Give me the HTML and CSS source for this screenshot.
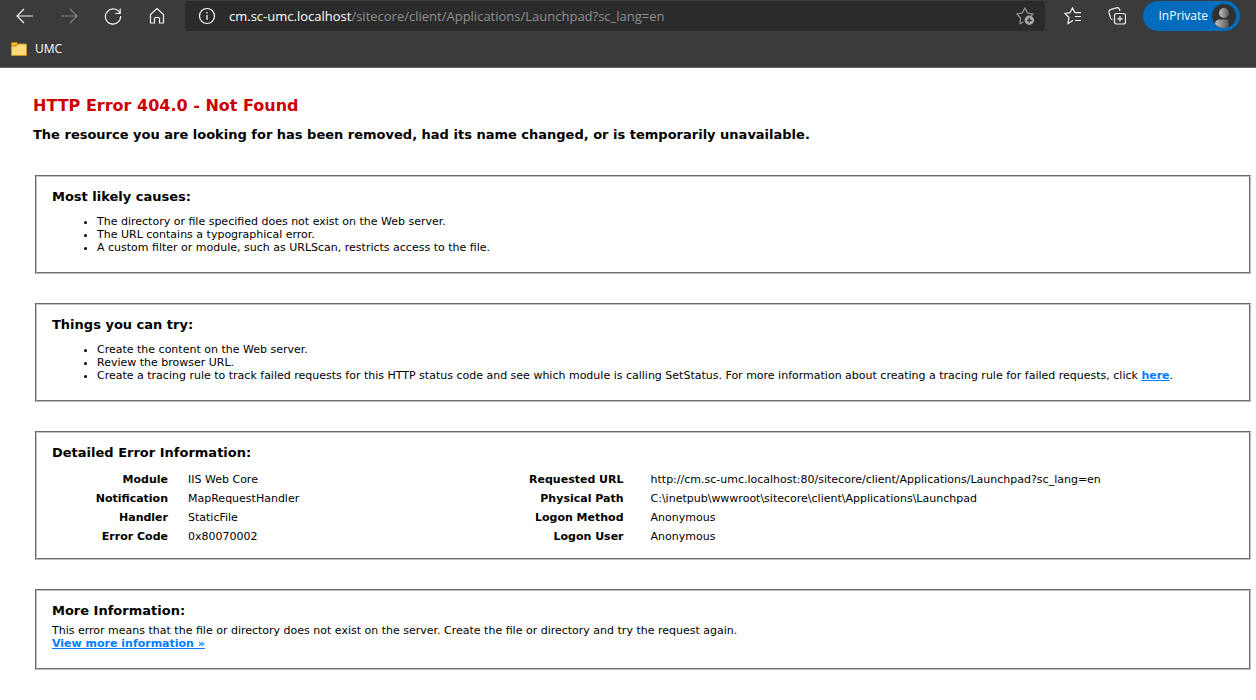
FILE: index.html
```html
<!DOCTYPE html>
<html lang="en">
<head>
<meta charset="utf-8">
<title>IIS 10.0 Detailed Error - 404.0 - Not Found</title>
<link rel="stylesheet" href="styles.css">
</head>
<body>
<header class="browser">
  <div class="toolbar">
    <nav class="nav-buttons" aria-label="Browser navigation">
      <button type="button" class="icon-button" aria-label="Back"><svg class="icon" viewBox="0 0 18 18"><path d="M8 2 1 9l7 7M1 9h16"/></svg></button>
      <button type="button" class="icon-button dim" aria-label="Forward"><svg class="icon" viewBox="0 0 18 18"><path d="m10 2 7 7-7 7M17 9H1"/></svg></button>
      <button type="button" class="icon-button" aria-label="Refresh"><svg class="icon" viewBox="0 0 18 18"><path d="M16 6.5A7.6 7.6 0 1 0 16.6 9M16.2 1.5v5h-5"/></svg></button>
      <button type="button" class="icon-button" aria-label="Home"><svg class="icon" viewBox="0 0 18 18"><path d="M2.5 7.5 9 1.5l6.500 6V16h-4v-4.500a1 1 0 0 0-1-1h-3a1 1 0 0 0-1 1V16h-4z"/></svg></button>
    </nav>
    <div class="address">
      <svg class="icon" viewBox="0 0 18 18"><circle cx="9" cy="9" r="7.500"/><path d="M9 8v5M9 5v1.500"/></svg>
      <p class="url"><span class="host">cm.sc-umc.localhost</span>/sitecore/client/Applications/Launchpad?sc_lang=en</p>
      <button type="button" class="icon-button star" aria-label="Add to favorites"><svg class="icon" viewBox="0 0 18 18"><path d="M7.500 15 4 16.500l.500-5.500L1 7l5.200-1L9 1l2.500 5L17 7l-2 2"/><circle class="solid" cx="13.300" cy="13.300" r="4.700"/><path class="cut" d="M13.300 10.800v5M10.800 13.300h5"/></svg></button>
    </div>
    <div class="actions">
      <button type="button" class="icon-button" aria-label="Favorites"><svg class="icon" viewBox="0 0 18 18"><path d="M9 13.500 4 16.500l1-6L1 6.500l5-.800L8.500 1 11 5.700h6M11 9.500h6M11 13.500h6"/></svg></button>
      <button type="button" class="icon-button" aria-label="Collections"><svg class="icon" viewBox="0 0 18 18"><rect x="6.500" y="6.500" width="11" height="10.500" rx="2"/><path d="M12 9v5.500M9.300 11.800h5.400M4.500 13C3 12.500 2.500 11.500 2.200 10L1 5.500C.600 3.700 1.300 2.700 3 2.300l5.500-1.500c1.600-.400 2.500.200 3 1.700l.500 1.500"/></svg></button>
    </div>
    <button type="button" class="profile">InPrivate
      <svg class="avatar" viewBox="0 0 24 24"><defs><linearGradient id="shade"><stop offset="0" stop-color="#c4c0bd"/><stop offset="1" stop-color="#5a5755"/></linearGradient><clipPath id="round"><circle cx="12" cy="12" r="12"/></clipPath></defs><circle cx="12" cy="12" r="12" fill="#333130"/><g clip-path="url(#round)" fill="url(#shade)"><circle cx="12" cy="9" r="5"/><path d="M3 24v-4c0-3 2-4.500 4.500-4.500h9V24z"/></g></svg>
    </button>
  </div>
  <div class="bookmarks">
    <a class="bookmark" href="#"><svg class="folder" viewBox="0 0 16 14"><path d="M.500 1.500a1 1 0 0 1 1-1h4l1 1.500h8a1 1 0 0 1 1 1v10.500H.500z" fill="#ffdc7b" stroke="#c8921a"/><path d="M.500 1.500a1 1 0 0 1 1-1h4l1 1.500-1 2h-5z" fill="#f7bd1f" stroke="#b98212"/></svg>UMC</a>
  </div>
</header>
<main class="content">
  <h1 class="title">HTTP Error 404.0 - Not Found</h1>
  <h2 class="subtitle">The resource you are looking for has been removed, had its name changed, or is temporarily unavailable.</h2>
  <div class="panels">
    <section class="panel">
      <h3 class="heading">Most likely causes:</h3>
      <ul class="list">
        <li>The directory or file specified does not exist on the Web server.</li>
        <li>The URL contains a typographical error.</li>
        <li>A custom filter or module, such as URLScan, restricts access to the file.</li>
      </ul>
    </section>
    <section class="panel">
      <h3 class="heading">Things you can try:</h3>
      <ul class="list">
        <li>Create the content on the Web server.</li>
        <li>Review the browser URL.</li>
        <li>Create a tracing rule to track failed requests for this HTTP status code and see which module is calling SetStatus. For more information about creating a tracing rule for failed requests, click <a class="link" href="#">here</a>.</li>
      </ul>
    </section>
    <section class="panel details">
      <h3 class="heading">Detailed Error Information:</h3>
      <div class="tables">
        <table class="facts">
          <tr><th scope="row">Module</th><td>IIS Web Core</td></tr>
          <tr><th scope="row">Notification</th><td>MapRequestHandler</td></tr>
          <tr><th scope="row">Handler</th><td>StaticFile</td></tr>
          <tr><th scope="row">Error Code</th><td>0x80070002</td></tr>
        </table>
        <table class="facts wide">
          <tr><th scope="row">Requested URL</th><td>http://cm.sc-umc.localhost:80/sitecore/client/Applications/Launchpad?sc_lang=en</td></tr>
          <tr><th scope="row">Physical Path</th><td>C:\inetpub\wwwroot\sitecore\client\Applications\Launchpad</td></tr>
          <tr><th scope="row">Logon Method</th><td>Anonymous</td></tr>
          <tr><th scope="row">Logon User</th><td>Anonymous</td></tr>
        </table>
      </div>
    </section>
    <section class="panel more">
      <h3 class="heading">More Information:</h3>
      <p class="note">This error means that the file or directory does not exist on the server. Create the file or directory and try the request again.</p>
      <a class="link" href="#">View more information »</a>
    </section>
  </div>
</main>
</body>
</html>
```
FILE: styles.css
```css
* { box-sizing: border-box; }
body {
  margin: 0;
  background: #fff;
  color: #000;
  font: 11px/13px Verdana, "DejaVu Sans", sans-serif;
}
h1, h2, h3, p, ul { margin: 0; padding: 0; }
button { border: 0; padding: 0; background: none; color: inherit; font: inherit; }

.browser {
  background: #3b3b3b;
  border-bottom: 1px solid #646262;
  color: #fff;
  font: 12px/16px "Segoe UI", "Open Sans", sans-serif;
}
.toolbar { display: flex; align-items: center; height: 32px; padding: 0 16px; }
.nav-buttons { display: flex; gap: 26px; margin-right: 19px; }
.icon-button { display: flex; color: #f2f2f2; }
.icon-button.dim { color: #858585; }
.icon { width: 18px; height: 18px; flex: none; fill: none; stroke: currentColor; stroke-width: 1.2; }
.address {
  display: flex;
  flex: 1;
  align-items: center;
  min-width: 0;
  height: 30px;
  padding: 0 11px 0 13px;
  border-radius: 4px;
  background: #2b2b2b;
}
.url { flex: 1; margin-left: 13px; color: #8f8f8f; font-size: 13px; white-space: nowrap; overflow: hidden; }
.host { color: #fff; }
.star { color: #999; }
.star .solid { fill: #a8a8a8; stroke: none; }
.star .cut { stroke: #2b2b2b; }
.actions { display: flex; gap: 26px; margin: 0 17px 0 19px; }
.profile {
  display: flex;
  align-items: center;
  gap: 4px;
  height: 30px;
  padding: 0 4px 0 15px;
  border-radius: 15px;
  background: #006cbe;
}
.avatar { width: 24px; height: 24px; }
.bookmarks { height: 35px; padding: 9px 11px; }
.bookmark { display: inline-flex; align-items: center; gap: 8px; color: #fff; text-decoration: none; }
.folder { width: 16px; height: 14px; }

.content { padding: 28px 5px 28px 33px; }
.title { color: #c00; font-size: 16px; line-height: 20px; }
.subtitle { margin-top: 11px; font-size: 13px; line-height: 16px; }
.panels { display: grid; gap: 29px; margin: 32px 0 0 2px; }
.panel { padding: 12px 14px 18px 15px; border: 2px groove #c0c0c0; }
.heading { margin-bottom: 10px; font-size: 13px; line-height: 16px; }
.list { padding-left: 45px; }
.link { color: #007eff; font-weight: bold; }
.details { padding-bottom: 12px; }
.details .heading { margin-bottom: 9px; }
.tables { display: grid; grid-template-columns: 38% 1fr; }
.facts { border-collapse: collapse; }
.facts th, .facts td { padding: 3px 0; vertical-align: top; }
.facts th { width: 116px; text-align: right; white-space: nowrap; }
.facts td { padding-left: 20px; text-align: left; }
.wide th { width: 122px; }
.wide td { padding-left: 27px; }
.more .heading { margin-bottom: 5px; }
```
